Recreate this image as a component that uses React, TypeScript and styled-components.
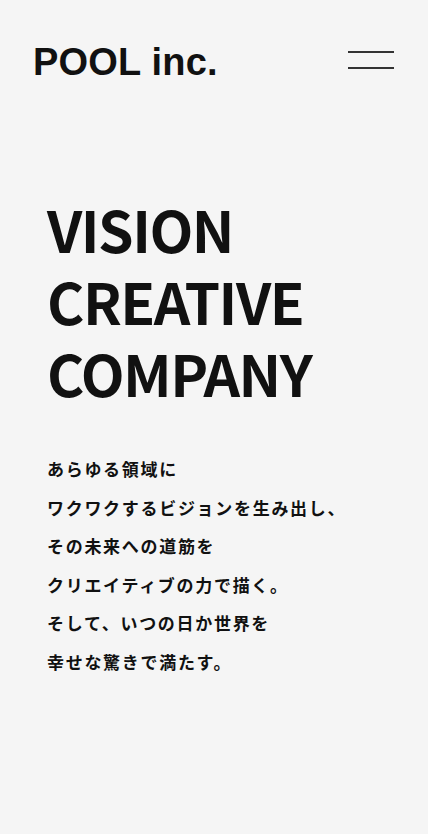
import styled, { createGlobalStyle } from 'styled-components'

const GlobalStyle = createGlobalStyle`
	* {
		box-sizing: border-box;
	}
	html,
	body {
		margin: 0;
		padding: 0;
		background: #f5f5f5;
	}
	body {
		font-family: 'Noto Sans CJK JP', 'Noto Sans', sans-serif;
		color: #111111;
	}
`

const lines = [
	'あらゆる領域に',
	'ワクワクするビジョンを生み出し、',
	'その未来への道筋を',
	'クリエイティブの力で描く。',
	'そして、いつの日か世界を',
	'幸せな驚きで満たす。'
]

const App = () => {
	return (
		<>
			<GlobalStyle />
			<Page>
				<Header>
					<Logo>POOL inc.</Logo>
					<MenuButton aria-label="menu">
						<MenuLine />
						<MenuLine />
					</MenuButton>
				</Header>
				<Hero>
					<Headline>
						VISION
						<br />
						CREATIVE
						<br />
						COMPANY
					</Headline>
					<Message>
						{lines.map((line) => (
							<MessageLine key={line}>{line}</MessageLine>
						))}
					</Message>
				</Hero>
			</Page>
		</>
	)
}

const Page = styled.div`
	min-height: 834px;
	background: #f5f5f5;
`

const Header = styled.header`
	display: flex;
	justify-content: space-between;
	align-items: center;
	padding: 43px 34px 0 33px;
`

const Logo = styled.div`
	font-family: 'Liberation Sans', Arial, sans-serif;
	font-weight: 700;
	font-size: 38px;
	line-height: 1;
	letter-spacing: 0.2px;
	color: #111111;
`

const MenuButton = styled.button`
	display: flex;
	flex-direction: column;
	justify-content: space-between;
	width: 46px;
	height: 17.5px;
	padding: 0;
	margin-top: -4px;
	border: none;
	background: transparent;
	cursor: pointer;
`

const MenuLine = styled.span`
	display: block;
	width: 100%;
	height: 1.5px;
	background: #333333;
`

const Hero = styled.main`
	padding: 111px 0 0 47px;
`

const Headline = styled.h1`
	margin: 0;
	font-family: 'Noto Sans CJK JP', 'Noto Sans', sans-serif;
	font-weight: 700;
	font-size: 57px;
	line-height: 72px;
	letter-spacing: -1.5px;
	color: #111111;
`

const Message = styled.div`
	margin-top: 42px;
	display: flex;
	flex-direction: column;
`

const MessageLine = styled.p`
	margin: 0;
	font-family: 'Noto Sans CJK JP', sans-serif;
	font-weight: 700;
	font-size: 17px;
	line-height: 38.5px;
	letter-spacing: 0.1em;
	color: #111111;
`

export default App
